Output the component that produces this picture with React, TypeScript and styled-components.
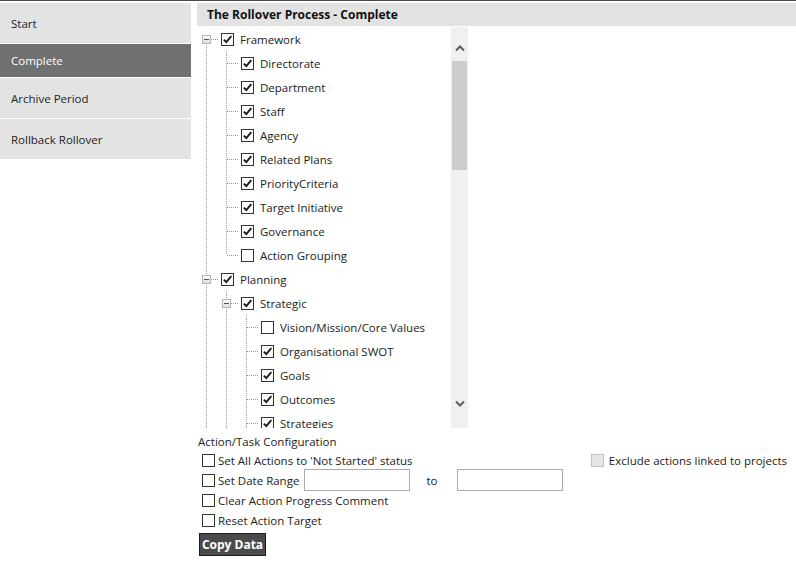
import styled, { createGlobalStyle, css } from "styled-components";

const GlobalStyle = createGlobalStyle`
  * { box-sizing: border-box; }
  html, body { margin: 0; padding: 0; background: #fff; }
  body {
    font-family: "Open Sans", "Noto Sans", Arial, sans-serif;
    font-size: 11.5px;
    color: #262626;
  }
`;

type TreeNode = { label: string; checked: boolean; children?: TreeNode[] };
type GuideKind = "blank" | "pipe" | "tee" | "ell" | "first";
type Row = {
  key: string;
  label: string;
  checked: boolean;
  guides: GuideKind[];
  expandable: boolean;
};

const tree: TreeNode[] = [
  {
    label: "Framework",
    checked: true,
    children: [
      { label: "Directorate", checked: true },
      { label: "Department", checked: true },
      { label: "Staff", checked: true },
      { label: "Agency", checked: true },
      { label: "Related Plans", checked: true },
      { label: "PriorityCriteria", checked: true },
      { label: "Target Initiative", checked: true },
      { label: "Governance", checked: true },
      { label: "Action Grouping", checked: false },
    ],
  },
  {
    label: "Planning",
    checked: true,
    children: [
      {
        label: "Strategic",
        checked: true,
        children: [
          { label: "Vision/Mission/Core Values", checked: false },
          { label: "Organisational SWOT", checked: true },
          { label: "Goals", checked: true },
          { label: "Outcomes", checked: true },
          { label: "Strategies", checked: true },
          { label: "Objectives", checked: true },
        ],
      },
      { label: "Operational", checked: true },
    ],
  },
  { label: "Reporting", checked: true },
];

// walk the tree into flat rows, working out the dotted guide for each indent column
const flatten = (nodes: TreeNode[], trail: boolean[], out: Row[]): Row[] => {
  nodes.forEach((node, i) => {
    const isLast = i === nodes.length - 1;
    const isFirstRoot = trail.length === 0 && i === 0;
    const own: GuideKind = isFirstRoot ? "first" : isLast ? "ell" : "tee";
    out.push({
      key: [...trail.map(String), node.label].join("/"),
      label: node.label,
      checked: node.checked,
      guides: [...trail.map((more) => (more ? "pipe" : "blank") as GuideKind), own],
      expandable: !!node.children,
    });
    if (node.children) flatten(node.children, [...trail, !isLast], out);
  });
  return out;
};

// only the rows that fit in the scrolled viewport get drawn
const VISIBLE_ROWS = 17;
const rows = flatten(tree, [], []).slice(0, VISIBLE_ROWS);

const navItems = ["Start", "Complete", "Archive Period", "Rollback Rollover"];

const options = [
  "Set All Actions to 'Not Started' status",
  "Set Date Range",
  "Clear Action Progress Comment",
  "Reset Action Target",
];

const Check = ({
  checked,
  disabled,
  inset,
}: {
  checked?: boolean;
  disabled?: boolean;
  inset?: number;
}) => (
  <CheckBox $disabled={disabled} $inset={inset}>
    {checked && (
      <svg width="11" height="11" viewBox="0 0 11 11">
        <path d="M1.8 5.6 L4.3 8.2 L9.3 2.2" fill="none" stroke="#1a1a1a" strokeWidth="1.9" />
      </svg>
    )}
  </CheckBox>
);

const Chevron = ({ down }: { down?: boolean }) => (
  <svg width="10" height="7" viewBox="0 0 10 7">
    <polyline
      points={down ? "1,1.5 5,5.5 9,1.5" : "1,5.5 5,1.5 9,5.5"}
      fill="none"
      stroke="#5f5f5f"
      strokeWidth="2"
    />
  </svg>
);

const App = () => {
  return (
    <>
      <GlobalStyle />
      <Page>
        <Nav>
          {navItems.map((item) => (
            <NavItem key={item} $active={item === "Complete"}>
              {item}
            </NavItem>
          ))}
        </Nav>

        <Main>
          <Header>The Rollover Process - Complete</Header>

          <TreeBox>
            <TreeViewport>
              {rows.map((row) => (
                <TreeRow key={row.key}>
                  {row.guides.map((kind, i) => (
                    <Guide key={i} $kind={kind}>
                      {row.expandable && i === row.guides.length - 1 && <Expander />}
                    </Guide>
                  ))}
                  <Check checked={row.checked} inset={2} />
                  <TreeLabel>{row.label}</TreeLabel>
                </TreeRow>
              ))}
            </TreeViewport>
            <ScrollBar>
              <ScrollButton $up>
                <Chevron />
              </ScrollButton>
              <ScrollTrack>
                <ScrollThumb />
              </ScrollTrack>
              <ScrollButton>
                <Chevron down />
              </ScrollButton>
            </ScrollBar>
          </TreeBox>

          <Config>
            <ConfigTitle>Action/Task Configuration</ConfigTitle>
            {options.map((opt, i) => (
              <OptionRow key={opt}>
                <Check />
                <OptionLabel>{opt}</OptionLabel>
                {i === 0 && (
                  <Exclude>
                    <Check disabled />
                    <OptionLabel $wide>Exclude actions linked to projects</OptionLabel>
                  </Exclude>
                )}
                {i === 1 && (
                  <>
                    <DateInput type="text" />
                    <ToLabel>to</ToLabel>
                    <DateInput type="text" $second />
                  </>
                )}
              </OptionRow>
            ))}
            <CopyButton>Copy Data</CopyButton>
          </Config>
        </Main>
      </Page>
    </>
  );
};

export default App;

const dotV = "repeating-linear-gradient(to bottom, #999 0 1px, transparent 1px 2px)";
const dotH = "repeating-linear-gradient(to right, #999 0 1px, transparent 1px 2px)";

const Page = styled.div`
  border-top: 1px solid #4a4a4a;
  padding-top: 2px;
  display: grid;
  grid-template-columns: 191px 1fr;
  column-gap: 6px;
  align-items: start;
`;

const Nav = styled.nav`
  display: flex;
  flex-direction: column;
  gap: 1px;
`;

const NavItem = styled.div<{ $active?: boolean }>`
  height: ${(p) => (p.$active ? "33px" : "40px")};
  padding-left: 11px;
  display: flex;
  align-items: center;
  background: ${(p) => (p.$active ? "#707070" : "#e3e3e3")};
  color: ${(p) => (p.$active ? "#fff" : "#222")};
`;

const Main = styled.main`
  display: flex;
  flex-direction: column;
`;

const Header = styled.div`
  height: 23px;
  padding-left: 10px;
  display: flex;
  align-items: center;
  background: #e3e3e3;
  font-size: 12px;
  font-weight: 700;
  color: #111;
`;

const TreeBox = styled.div`
  margin: 1px 0 0 2px;
  width: 269px;
  height: 401px;
  display: flex;
`;

const TreeViewport = styled.div`
  flex: 1;
  overflow: hidden;
`;

const TreeRow = styled.div`
  height: 24px;
  display: flex;
  align-items: center;
`;

const guideStyles: Record<GuideKind, ReturnType<typeof css>> = {
  blank: css``,
  pipe: css`
    background: ${dotV} 7px 0 / 1px 100% no-repeat;
  `,
  tee: css`
    background: ${dotV} 7px 0 / 1px 100% no-repeat, ${dotH} 8px 12px / 12px 1px no-repeat;
  `,
  ell: css`
    background: ${dotV} 7px 0 / 1px 12px no-repeat, ${dotH} 8px 12px / 12px 1px no-repeat;
  `,
  first: css`
    background: ${dotV} 7px 12px / 1px 12px no-repeat, ${dotH} 8px 12px / 12px 1px no-repeat;
  `,
};

const Guide = styled.div<{ $kind: GuideKind }>`
  width: 20px;
  height: 24px;
  flex: none;
  display: flex;
  align-items: center;
  ${(p) => guideStyles[p.$kind]}
`;

const Expander = styled.span`
  margin-left: 3px;
  width: 9px;
  height: 9px;
  border: 1px solid #b4b4b4;
  background: linear-gradient(#fdfdfd, #dcdcdc);
  display: flex;
  align-items: center;
  justify-content: center;

  &::after {
    content: "";
    width: 5px;
    height: 1px;
    background: #555;
  }
`;

const CheckBox = styled.span<{ $disabled?: boolean; $inset?: number }>`
  flex: none;
  margin-left: ${(p) => p.$inset ?? 0}px;
  width: 13px;
  height: 13px;
  border: 1px solid ${(p) => (p.$disabled ? "#c2c2c2" : "#333")};
  background: ${(p) => (p.$disabled ? "#e6e6e6" : "#fff")};
  display: flex;
  align-items: center;
  justify-content: center;
`;

const TreeLabel = styled.span`
  margin-left: 6px;
  white-space: nowrap;
  color: #222;
`;

const ScrollBar = styled.div`
  width: 17px;
  flex: none;
  background: #f0f0f0;
  display: flex;
  flex-direction: column;
`;

const ScrollButton = styled.div<{ $up?: boolean }>`
  height: 34px;
  flex: none;
  display: flex;
  justify-content: center;
  align-items: flex-start;
  padding-top: ${(p) => (p.$up ? "18px" : "6px")};
`;

const ScrollTrack = styled.div`
  flex: 1;
`;

const ScrollThumb = styled.div`
  height: 109px;
  margin: 0 1px;
  background: #cdcdcd;
`;

const Config = styled.section`
  margin-top: 6px;
  padding-left: 1px;
  display: flex;
  flex-direction: column;
`;

const ConfigTitle = styled.div`
  height: 16px;
  line-height: 16px;
  color: #222;
`;

const OptionRow = styled.div`
  height: 20px;
  padding-left: 4px;
  display: flex;
  align-items: center;
`;

const OptionLabel = styled.span<{ $wide?: boolean }>`
  margin-left: ${(p) => (p.$wide ? "5px" : "3px")};
  white-space: nowrap;
  color: #222;
`;

const Exclude = styled.div`
  margin-left: auto;
  margin-right: 9px;
  display: flex;
  align-items: center;
`;

const DateInput = styled.input<{ $second?: boolean }>`
  margin: 0 0 0 ${(p) => (p.$second ? "20px" : "5px")};
  width: 106px;
  height: 22px;
  border: 1px solid #ababab;
  background: #fff;
  font: inherit;
  padding: 0 4px;
  outline: none;
`;

const ToLabel = styled.span`
  margin-left: 16px;
  color: #222;
`;

const CopyButton = styled.button`
  align-self: flex-start;
  margin: 3px 0 0 1px;
  width: 67px;
  height: 23px;
  padding: 0;
  border: 1px solid #1c1c1c;
  background: #4b4b4b;
  color: #fff;
  font-family: inherit;
  font-size: 12px;
  font-weight: 700;
  cursor: pointer;
`;
